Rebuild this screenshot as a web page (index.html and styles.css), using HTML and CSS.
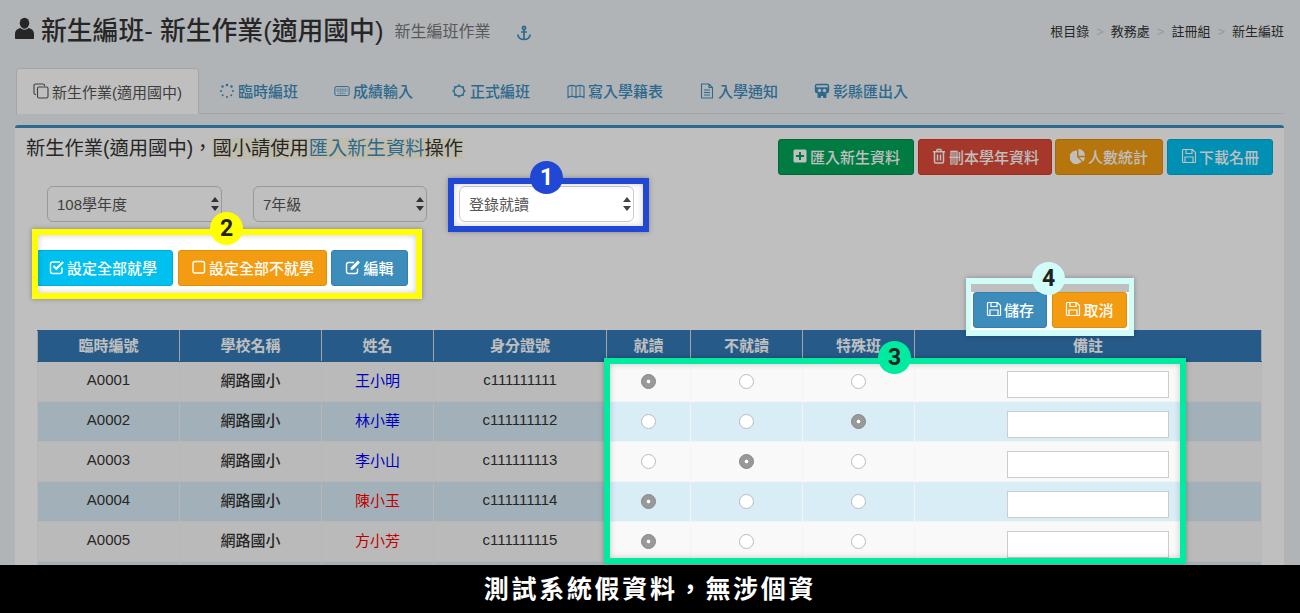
FILE: index.html
```html
<!DOCTYPE html>
<html lang="zh-Hant">
<head>
    <meta charset="UTF-8">
    <title>新生編班</title>
    <link rel="stylesheet" href="styles.css">
</head>
<body>
<svg class="sprite" xmlns="http://www.w3.org/2000/svg">
    <symbol id="i-user" viewBox="0 0 20 20" preserveAspectRatio="none"><circle cx="10" cy="5.600" r="5" fill="currentColor"/><path d="M0 19v-3.600c0-3 2.800-4.900 5.800-5.300 1 .9 2.700 1.400 4.200 1.400s3.200-.5 4.200-1.400c3 .4 5.800 2.300 5.800 5.300V19c0 .6-.4 1-1 1H1c-.6 0-1-.4-1-1z" fill="currentColor"/></symbol>
    <symbol id="i-anchor" viewBox="0 0 16 16"><g fill="none" stroke="currentColor" stroke-width="1.700"><circle cx="8" cy="3" r="1.600"/><path d="M8 4.600V14.500M5 7h6M1.800 9.500c.4 3 3 5 6.200 5s5.800-2 6.200-5"/></g></symbol>
    <symbol id="i-copy" viewBox="0 0 16 16"><g fill="none" stroke="currentColor" stroke-width="1.100"><path d="M3 11.500H2.500A1.500 1.500 0 0 1 1 10V2.500A1.500 1.500 0 0 1 2.500 1H10a1.500 1.500 0 0 1 1.500 1.500V3"/><rect x="4.500" y="4" width="10.500" height="11" rx="1.500"/></g></symbol>
    <symbol id="i-spinner" viewBox="0 0 16 16"><g fill="currentColor"><circle cx="8" cy="2" r="1.300"/><circle cx="12.500" cy="3.500" r="1.200"/><circle cx="14" cy="8" r="1"/><circle cx="12.300" cy="12.300" r="1"/><circle cx="8" cy="14" r="1"/><circle cx="3.700" cy="12.300" r="1"/><circle cx="2" cy="8" r="1.100"/><circle cx="3.500" cy="3.500" r="1.200"/></g></symbol>
    <symbol id="i-keyboard" viewBox="0 0 18 16"><rect x="1" y="3" width="16" height="10" rx="1.500" fill="none" stroke="currentColor" stroke-width="1.100"/><path d="M3 6h12M3 8h12M5 10.500h8" stroke="currentColor" stroke-width="1.100" stroke-dasharray="1.200 .7" fill="none"/></symbol>
    <symbol id="i-sun" viewBox="0 0 16 16"><circle cx="8" cy="8" r="5" fill="none" stroke="currentColor" stroke-width="1.300"/><path d="M8 .8l1.200 2H6.800zM8 15.200l1.200-2H6.800zM.8 8l2-1.200v2.400zM15.200 8l-2-1.200v2.400zM2.900 2.900l2.300.6-1.700 1.700zM13.100 2.900l-2.300.6 1.700 1.700zM2.900 13.100l2.300-.6-1.700-1.700zM13.100 13.100l-2.300-.6 1.700-1.700z" fill="currentColor"/></symbol>
    <symbol id="i-map" viewBox="0 0 18 16"><path d="M1 3.500c2.500-1.500 5-1.500 8 0 3-1.500 5.500-1.500 8 0v11c-2.500-1.500-5-1.500-8 0-3-1.500-5.500-1.500-8 0zM9 3.500v11" fill="none" stroke="currentColor" stroke-width="1.100"/><path d="M5 2.500v11M13 2.500v11" fill="none" stroke="currentColor" stroke-width=".8"/></symbol>
    <symbol id="i-file" viewBox="0 0 16 16"><path d="M2.500 1h7.500l3.500 3.500V15h-11zM10 1v3.500h3.500M5 7h6M5 9.500h6M5 12h6" fill="none" stroke="currentColor" stroke-width="1.100"/></symbol>
    <symbol id="i-built" viewBox="0 0 16 16"><path d="M3 .8h10A2.200 2.200 0 0 1 15.200 3v5A2.200 2.200 0 0 1 13 10.200h-.5V14a1 1 0 0 1-1 1H10a1 1 0 0 1-1-1v-1H7v1a1 1 0 0 1-1 1H4.500a1 1 0 0 1-1-1v-3.800H3A2.200 2.200 0 0 1 .8 8V3A2.200 2.200 0 0 1 3 .8z" fill="currentColor"/><rect x="2.300" y="2.300" width="11.400" height="2" fill="#ecf0f5"/><circle cx="5.500" cy="7.500" r="1.700" fill="#ecf0f5"/><circle cx="10.500" cy="7.500" r="1.700" fill="#ecf0f5"/></symbol>
    <symbol id="i-plus" viewBox="0 0 16 16"><path fill-rule="evenodd" d="M3 1.500h10A1.500 1.500 0 0 1 14.500 3v10a1.500 1.500 0 0 1-1.500 1.500H3A1.500 1.500 0 0 1 1.500 13V3A1.500 1.500 0 0 1 3 1.500zM7 4v3H4v2h3v3h2V9h3V7H9V4z" fill="currentColor"/></symbol>
    <symbol id="i-trash" viewBox="0 0 16 16"><path d="M3.500 4.500v9c0 .8.500 1.500 1.200 1.500h6.600c.7 0 1.200-.7 1.200-1.500v-9M2 3.800h12M5.500 3.500l.8-2h3.400l.8 2M6.500 6.500v6M9.500 6.500v6" fill="none" stroke="currentColor" stroke-width="1.500"/></symbol>
    <symbol id="i-pie" viewBox="0 0 16 16"><path d="M7 2.500V9l4.600 4.600A6.800 6.800 0 1 1 7 2.500z" fill="currentColor"/><path d="M8.500 1a6.800 6.800 0 0 1 6.500 6.800H8.500z" fill="currentColor"/><path d="M9 9.200h6a6.500 6.500 0 0 1-2 4.300z" fill="currentColor"/></symbol>
    <symbol id="i-save" viewBox="0 0 16 16"><path d="M2.500 1.500h9l3 3V14a.5.5 0 0 1-.5.500H2.500A1 1 0 0 1 1.500 13.500v-11a1 1 0 0 1 1-1zM5 1.500v4h6v-4M4 14.500V9h8v5.500" fill="none" stroke="currentColor" stroke-width="1.200"/></symbol>
    <symbol id="i-check" viewBox="0 0 16 16"><path d="M13 8.500V12.500a2 2 0 0 1-2 2H3.500a2 2 0 0 1-2-2V5a2 2 0 0 1 2-2H11" fill="none" stroke="currentColor" stroke-width="1.400"/><path d="M4.500 7l2.800 2.800L14.200 3" fill="none" stroke="currentColor" stroke-width="2"/></symbol>
    <symbol id="i-square" viewBox="0 0 16 16"><rect x="2" y="2.500" width="11.500" height="11.500" rx="2" fill="none" stroke="currentColor" stroke-width="1.400"/></symbol>
    <symbol id="i-edit" viewBox="0 0 16 16"><path d="M12.500 9.500v3a2 2 0 0 1-2 2H3.500a2 2 0 0 1-2-2v-7a2 2 0 0 1 2-2H9" fill="none" stroke="currentColor" stroke-width="1.400"/><path d="M6 8.200L12.800 1.400 15 3.600 8.200 10.400 5.500 11z" fill="currentColor"/></symbol>
</svg>

<div class="page">
    <header class="page-head">
        <svg class="icon-user"><use href="#i-user"/></svg>
        <h1>新生編班- 新生作業(適用國中)</h1>
        <small>新生編班作業</small>
        <svg class="icon-anchor"><use href="#i-anchor"/></svg>
        <ol class="crumbs">
            <li>根目錄</li>
            <li>教務處</li>
            <li>註冊組</li>
            <li>新生編班</li>
        </ol>
    </header>

    <nav class="tabs">
        <a class="tab active"><svg class="icon"><use href="#i-copy"/></svg>新生作業(適用國中)</a>
        <a class="tab"><svg class="icon"><use href="#i-spinner"/></svg>臨時編班</a>
        <a class="tab"><svg class="icon"><use href="#i-keyboard"/></svg>成績輸入</a>
        <a class="tab tab-sun"><svg class="icon"><use href="#i-sun"/></svg>正式編班</a>
        <a class="tab tab-map"><svg class="icon"><use href="#i-map"/></svg>寫入學籍表</a>
        <a class="tab"><svg class="icon"><use href="#i-file"/></svg>入學通知</a>
        <a class="tab"><svg class="icon"><use href="#i-built"/></svg>彰縣匯出入</a>
    </nav>

    <section class="panel">
        <div class="panel-head">
            <h3>新生作業(適用國中)，<span class="mark">國小請使用<a>匯入新生資料</a>操作</span></h3>
            <div class="btn-row">
                <button class="btn green"><svg class="icon"><use href="#i-plus"/></svg>匯入新生資料</button>
                <button class="btn red"><svg class="icon"><use href="#i-trash"/></svg>刪本學年資料</button>
                <button class="btn orange"><svg class="icon"><use href="#i-pie"/></svg>人數統計</button>
                <button class="btn cyan"><svg class="icon"><use href="#i-save"/></svg>下載名冊</button>
            </div>
        </div>

        <div class="filters">
            <div class="select-box"><span>108學年度</span><i class="updown"></i></div>
            <div class="select-box"><span>7年級</span><i class="updown"></i></div>
            <div class="select-box"><span>登錄就讀</span><i class="updown"></i></div>
        </div>

        <div class="actions">
            <button class="btn cyan set-all"><svg class="icon"><use href="#i-check"/></svg>設定全部就學</button>
            <button class="btn orange unset-all"><svg class="icon"><use href="#i-square"/></svg>設定全部不就學</button>
            <button class="btn blue edit"><svg class="icon"><use href="#i-edit"/></svg>編輯</button>
        </div>

        <div class="save-row">
            <button class="btn blue save"><svg class="icon"><use href="#i-save"/></svg>儲存</button>
            <button class="btn orange cancel"><svg class="icon"><use href="#i-save"/></svg>取消</button>
        </div>

        <table class="students">
            <colgroup>
                <col class="c1"><col class="c2"><col class="c3"><col class="c4">
                <col class="c5"><col class="c6"><col class="c7"><col class="c8">
            </colgroup>
            <thead>
            <tr><th>臨時編號</th><th>學校名稱</th><th>姓名</th><th>身分證號</th><th>就讀</th><th>不就讀</th><th>特殊班</th><th>備註</th></tr>
            </thead>
            <tbody>
            <tr>
                <td>A0001</td><td class="school">網路國小</td><td class="boy">王小明</td><td>c111111111</td>
                <td><input type="radio" name="r1" checked></td><td><input type="radio" name="r1"></td><td><input type="radio" name="r1"></td>
                <td><input type="text" class="note"></td>
            </tr>
            <tr>
                <td>A0002</td><td class="school">網路國小</td><td class="boy">林小華</td><td>c111111112</td>
                <td><input type="radio" name="r2"></td><td><input type="radio" name="r2"></td><td><input type="radio" name="r2" checked></td>
                <td><input type="text" class="note"></td>
            </tr>
            <tr>
                <td>A0003</td><td class="school">網路國小</td><td class="boy">李小山</td><td>c111111113</td>
                <td><input type="radio" name="r3"></td><td><input type="radio" name="r3" checked></td><td><input type="radio" name="r3"></td>
                <td><input type="text" class="note"></td>
            </tr>
            <tr>
                <td>A0004</td><td class="school">網路國小</td><td class="girl">陳小玉</td><td>c111111114</td>
                <td><input type="radio" name="r4" checked></td><td><input type="radio" name="r4"></td><td><input type="radio" name="r4"></td>
                <td><input type="text" class="note"></td>
            </tr>
            <tr>
                <td>A0005</td><td class="school">網路國小</td><td class="girl">方小芳</td><td>c111111115</td>
                <td><input type="radio" name="r5" checked></td><td><input type="radio" name="r5"></td><td><input type="radio" name="r5"></td>
                <td><input type="text" class="note"></td>
            </tr>
            <tr><td></td><td></td><td></td><td></td><td></td><td></td><td></td><td></td></tr>
            </tbody>
        </table>
    </section>
</div>

<!-- dimmed layer with holes, then the tutorial frames on top -->
<div class="dim"></div>
<div class="frame frame-1"><b class="badge">1</b></div>
<div class="frame frame-2"><b class="badge">2</b></div>
<div class="frame frame-3"><b class="badge">3</b></div>
<div class="frame frame-4"><b class="badge">4</b></div>

<div class="caption">測試系統假資料，無涉個資</div>
</body>
</html>
```

FILE: styles.css
```css
* {
    box-sizing: border-box;
}
html, body {
    margin: 0;
    height: 613px;
    overflow: hidden;
}
body {
    position: relative;
    background-color: #ecf0f5;
    color: #333;
    font-family: "Liberation Sans", "Noto Sans CJK TC", sans-serif;
    font-size: 15px;
}
.sprite {
    display: none;
}
.page {
    height: 613px;
    overflow: hidden;
}
.icon {
    width: 16px;
    height: 16px;
    margin-right: 3px;
    flex: none;
}

/* header */
.page-head {
    display: flex;
    align-items: center;
    height: 42px;
    margin-top: 9px;
    padding: 0 16px 0 15px;
}
.icon-user {
    width: 19px;
    height: 22px;
    margin: -4px 7px 0 0;
    flex: none;
}
.page-head h1 {
    margin: -3px 0 0;
    font-size: 25.800px;
    font-weight: 500;
    white-space: nowrap;
}
.page-head small {
    margin-left: 11px;
    font-size: 16px;
    color: #777;
}
.icon-anchor {
    width: 16px;
    height: 16px;
    margin-left: 25px;
    margin-top: 6px;
    color: #3c8dbc;
}
.crumbs {
    display: flex;
    margin: 0 0 0 auto;
    padding: 0;
    list-style: none;
    font-size: 13px;
}
.crumbs li + li::before {
    content: ">";
    color: #ccc;
    padding: 0 7px;
}

/* tabs */
.tabs {
    display: flex;
    height: 46px;
    margin: 17px 16px 0;
    border-bottom: 1px solid #ddd;
}
.tab {
    display: flex;
    align-items: center;
    padding: 0 18px;
    color: #3c8dbc;
    font-weight: 500;
    white-space: nowrap;
}
.tab-sun {
    margin-left: 2px;
}
.tab-map {
    margin-left: 1px;
}
.tab-map .icon {
    width: 18px;
}
.tab.active {
    width: 183px;
    height: 46px;
    padding: 0 16px 1px;
    margin-right: 2px;
    background-color: #fff;
    color: #555;
    font-weight: 400;
    border: 1px solid #ddd;
    border-bottom: none;
    border-radius: 4px 4px 0 0;
}

/* panel */
.panel {
    height: 488px;
    margin: 11px 16px 0 15px;
    background-color: #fff;
    border-top: 3px solid #3c8dbc;
    border-radius: 3px 3px 0 0;
}
.panel-head {
    display: flex;
    justify-content: space-between;
    padding: 11px 11px 0;
}
.panel-head h3 {
    margin: -1px 0 0;
    font-size: 19.300px;
    font-weight: 400;
    line-height: 22px;
}
.mark {
    background-color: #fffbe6;
}
.mark a {
    color: #3c8dbc;
}
.btn-row {
    display: flex;
    gap: 4px;
}
.btn-row .green { width: 136px; }
.btn-row .red { width: 134px; }
.btn-row .orange { width: 108px; margin-left: -1px; }
.btn-row .cyan { width: 106px; }
.btn {
    display: inline-flex;
    align-items: center;
    justify-content: center;
    height: 36px;
    padding: 0 12px 2px;
    border: 1px solid transparent;
    border-radius: 3px;
    color: #fff;
    font-family: inherit;
    font-size: 15px;
    font-weight: 500;
    white-space: nowrap;
}
.btn .icon {
    margin-right: 2px;
}
.green { background-color: #00a65a; border-color: #008d4c; }
.red { background-color: #dd4b39; border-color: #d73925; }
.orange { background-color: #f39c12; border-color: #e08e0b; }
.cyan { background-color: #00c0ef; border-color: #00acd6; }
.blue { background-color: #3c8dbc; border-color: #367fa9; }

/* filters */
.filters {
    display: flex;
    gap: 31px;
    padding: 11px 0 0 32px;
}
.select-box {
    position: relative;
    display: flex;
    align-items: center;
    width: 175px;
    height: 36px;
    padding: 0 0 2px 9px;
    background-color: #fff;
    border: 1px solid #ccc;
    border-radius: 6px;
    color: #555;
}
.select-box:nth-child(2) {
    width: 174px;
    margin-right: 1px;
}
.updown {
    position: absolute;
    right: 6px;
    top: 10px;
    width: 0;
    height: 14px;
}
.updown::before, .updown::after {
    content: "";
    position: absolute;
    left: -4px;
    border-left: 4px solid transparent;
    border-right: 4px solid transparent;
}
.updown::before {
    top: 0;
    border-bottom: 5px solid #444;
}
.updown::after {
    bottom: 0;
    border-top: 5px solid #444;
}

/* button rows */
.actions {
    display: flex;
    gap: 4px;
    margin-top: 28px;
    padding-left: 18px;
}
.set-all {
    width: 140px;
    margin-right: 1px;
}
.unset-all {
    width: 149px;
}
.edit {
    width: 77px;
}
.save-row {
    display: flex;
    justify-content: flex-end;
    gap: 5px;
    margin-top: 6px;
    padding-right: 157px;
}
.save {
    width: 74px;
}
.cancel {
    width: 75px;
}

/* table */
.students {
    width: 1225px;
    margin: 2px 0 0 22px;
    border-collapse: collapse;
    table-layout: fixed;
}
.c1 { width: 142px; }
.c2 { width: 142px; }
.c3 { width: 112px; }
.c4 { width: 173px; }
.c5 { width: 84px; }
.c6 { width: 112px; }
.c7 { width: 112px; }
.students th {
    height: 31px;
    padding: 0 0 3px;
    background-color: #337ab7;
    color: #fff;
    font-weight: 700;
    border: 1px solid #ddd;
    border-top-color: #337ab7;
    border-bottom-color: #337ab7;
}
.students td {
    height: 40px;
    padding: 0 0 5px;
    text-align: center;
    border: 1px solid #f4f4f4;
}
.students tbody tr:nth-child(odd) {
    background-color: #f9f9f9;
}
.students tbody tr:nth-child(even) {
    background-color: #d9edf7;
}
.school {
    font-weight: 500;
}
.boy { color: #0000ff; }
.girl { color: #ff0000; }
.students input[type="radio"] {
    appearance: none;
    display: block;
    width: 15px;
    height: 15px;
    margin: 5px auto 0;
    background-color: #fff;
    border: 1px solid #bbb;
    border-radius: 50%;
}
.students input[type="radio"]:checked {
    background: radial-gradient(circle, #fff 0 1.500px, #999 2.200px);
    border-color: #888;
}
.note {
    display: block;
    width: 162px;
    height: 27px;
    margin: 8px auto -2px;
    background-color: #fff;
    border: 1px solid #ccc;
}

/* tutorial overlay */
.dim {
    position: absolute;
    inset: 0;
    background-color: rgba(0, 0, 0, .25);
    clip-path: path(evenodd, "M0 0H1300V613H0Z M454 184H643V226H454Z M38 235H416V293H38Z M610 364H1180V558H610Z M971 292H1129V330H971Z");
}
.frame {
    position: absolute;
    border-style: solid;
    border-width: 6px;
    box-shadow: 0 0 5px rgba(0, 0, 0, .3), inset 0 0 6px rgba(0, 0, 0, .2);
}
.frame-1 { left: 448px; top: 178px; width: 201px; height: 54px; border-color: #2148d4; }
.frame-2 { left: 32px; top: 229px; width: 390px; height: 70px; border-color: #ffff00; }
.frame-3 { left: 604px; top: 358px; width: 582px; height: 206px; border-color: #00eb9f; }
.frame-4 {
    left: 966px;
    top: 278px;
    width: 168px;
    height: 58px;
    border-width: 6px 5px;
    border-color: #d0fdf7;
    box-shadow: 0 0 5px rgba(0, 0, 0, .3);
}
.badge {
    position: absolute;
    width: 33px;
    height: 33px;
    line-height: 33px;
    border-radius: 50%;
    text-align: center;
    font-family: Roboto, sans-serif;
    font-size: 23px;
    font-weight: 700;
    color: #222;
}
.frame-1 .badge { left: 76px; top: -23px; background-color: #2148d4; color: #fff; }
.frame-2 .badge { left: 172px; top: -23px; background-color: #ffff00; }
.frame-3 .badge { left: 268px; top: -23px; background-color: #00eb9f; }
.frame-4 .badge { left: 61px; top: -22px; background-color: #d0fdf7; }

.caption {
    position: absolute;
    left: 0;
    right: 0;
    bottom: 0;
    height: 48px;
    background-color: #000;
    color: #fff;
    text-align: center;
    font-size: 25px;
    font-weight: 700;
    line-height: 48px;
    letter-spacing: 2.700px;
}
```
